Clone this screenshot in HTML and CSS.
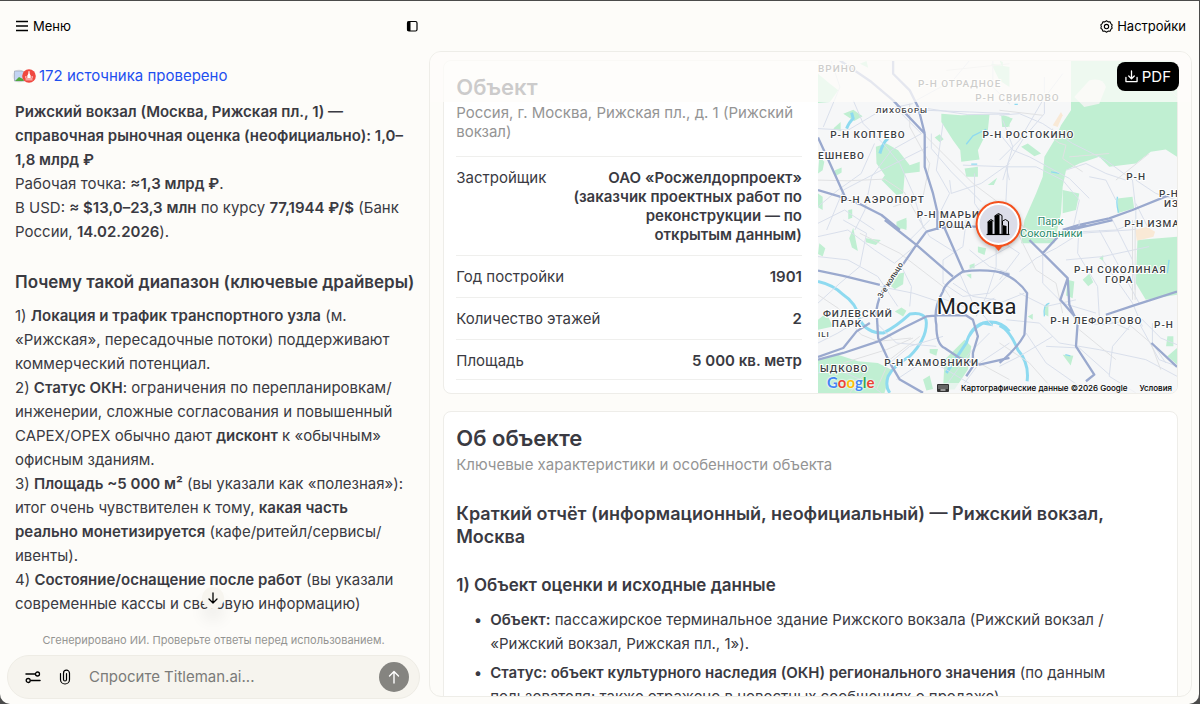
FILE: index.html
```html
<!DOCTYPE html>
<html lang="ru">
<head>
    <meta charset="UTF-8">
    <meta name="viewport" content="width=device-width, initial-scale=1.0">
    <title>Titleman.ai</title>
    <link rel="stylesheet" href="styles.css">
</head>
<body>
    <div class="app">
        <header class="topbar">
            <div class="topbar-left">
                <button class="link-btn" type="button">
                    <svg class="icon-menu" viewBox="0 0 14 14" width="14" height="14"><path d="M1 2.500h12M1 7h12M1 11.500h12"/></svg>
                    Меню
                </button>
                <button class="link-btn" type="button" aria-label="Свернуть панель">
                    <svg viewBox="0 0 12 12" width="12" height="12"><rect x="1.500" y="1.500" width="9.500" height="9.500" rx="1.500" fill="none" stroke="#000" stroke-width="1.200"/><path d="M1.500 1.500h3v9.500h-3z" fill="#000"/></svg>
                </button>
            </div>
            <button class="link-btn" type="button">
                <svg class="icon-line" viewBox="0 0 24 24" width="13" height="13"><path d="M12 1.500l3 2 3.500-.2 1.500 3.300 2.500 2.400-1 3 1 3-2.500 2.400-1.500 3.300-3.500-.2-3 2-3-2-3.500.2L4 17.400 1.500 15l1-3-1-3L4 6.600l1.500-3.300 3.500.2z"/><circle cx="12" cy="12" r="4"/></svg>
                Настройки
            </button>
        </header>

        <main class="columns">
            <section class="chat">
                <div class="messages">
                    <a class="sources" href="#sources">
                        <svg width="24" height="14" viewBox="0 0 24 14">
                            <circle cx="7" cy="7" r="6.500" fill="#e9e9e9"/>
                            <path d="M2.500 2h8l2 2v8h-10z" fill="#c3d4f3" stroke="#9aa3b5" stroke-width=".7"/>
                            <path d="M3 12l4-4 4 2 1 2z" fill="#4fa83d"/>
                            <circle cx="17" cy="7" r="6.800" fill="#f0473f"/>
                            <path d="M16.600 2h.8l.4 3 .9 1.500V9h1V7h.8v2.500h-7V7h.8v2h1V6.500l.9-1.500zM13.500 10.500h7v.8h-7z" fill="#fff"/>
                        </svg>
                        172 источника проверено
                    </a>
                    <p>
                        <b>Рижский вокзал (Москва, Рижская пл., 1) — справочная рыночная оценка (неофициально): 1,0–<wbr>1,8&nbsp;млрд&nbsp;₽</b><br>
                        Рабочая точка: <b>≈1,3 млрд ₽</b>.<br>
                        В USD: <b>≈ $13,0–23,3 млн</b> по курсу <b>77,1944 ₽/$</b> (Банк России, <b>14.02.2026</b>).
                    </p>
                    <h3>Почему такой диапазон (ключевые драйверы)</h3>
                    <p>
                        1) <b>Локация и трафик транспортного узла</b> (м. «Рижская», пересадочные потоки) поддерживают коммерческий потенциал.<br>
                        2) <b>Статус ОКН</b>: ограничения по перепланировкам/<wbr>инженерии, сложные согласования и повышенный CAPEX/OPEX обычно дают <b>дисконт</b> к «обычным» офисным зданиям.<br>
                        3) <b>Площадь ~5 000 м²</b> (вы указали как «полезная»): итог очень чувствителен к тому, <b>какая часть реально монетизируется</b> (кафе/ритейл/сервисы/<wbr>ивенты).<br>
                        4) <b>Состояние/оснащение после работ</b> (вы указали современные кассы и световую информацию)
                    </p>
                </div>

                <div class="composer">
                    <button class="scroll-down" type="button" aria-label="Вниз">
                        <svg class="icon-line" viewBox="0 0 12 12" width="12" height="12"><path d="M6 1v10M2 7l4 4 4-4" stroke-width="1.300"/></svg>
                    </button>
                    <p class="disclaimer">Сгенерировано ИИ. Проверьте ответы перед использованием.</p>
                    <form class="prompt">
                        <button class="tool" type="button" aria-label="Параметры">
                            <svg class="icon-line" viewBox="0 0 16 14" width="16" height="14"><path d="M1 4h9M6 10.500h9" stroke-width="1.500"/><circle cx="12.500" cy="4" r="2" stroke-width="1.300"/><circle cx="3.200" cy="10.500" r="2" stroke-width="1.300"/></svg>
                        </button>
                        <button class="tool" type="button" aria-label="Прикрепить файл">
                            <svg class="icon-line" viewBox="0 0 12 16" width="12" height="16"><path d="M1.500 4.500v6a4.500 4.500 0 0 0 9 0V4.200a3 3 0 0 0-6 0v6.300a1.500 1.500 0 0 0 3 0V4.500" stroke-width="1.200"/></svg>
                        </button>
                        <input type="text" placeholder="Спросите Titleman.ai..." aria-label="Сообщение">
                        <button class="send" type="submit" aria-label="Отправить">
                            <svg viewBox="0 0 14 14" width="14" height="14"><path d="M7 13V1.500M2.500 6L7 1.500 11.500 6"/></svg>
                        </button>
                    </form>
                </div>
            </section>

            <section class="report">
                <div class="report-bar">
                    <button class="pdf" type="button">
                        <svg viewBox="0 0 14 14" width="13" height="13"><path d="M7 1v8M4 6.500L7 9.500l3-3M1 8v4.500h12V8"/></svg>
                        PDF
                    </button>
                </div>

                <article class="card object">
                    <div class="object-info">
                        <h1>Объект</h1>
                        <p class="subtitle">Россия, г. Москва, Рижская пл., д. 1 (Рижский вокзал)</p>
                        <table>
                            <tbody>
                                <tr><th scope="row">Застройщик</th><td>ОАО «Росжелдорпроект» (заказчик проектных работ по реконструкции — по открытым данным)</td></tr>
                                <tr><th scope="row">Год постройки</th><td>1901</td></tr>
                                <tr><th scope="row">Количество этажей</th><td>2</td></tr>
                                <tr><th scope="row">Площадь</th><td>5 000 кв. метр</td></tr>
                            </tbody>
                        </table>
                    </div>
                    <div class="map">
                        <svg class="map-canvas" viewBox="0 0 360 334" preserveAspectRatio="xMidYMid slice">
                            <!-- north-west -->
                            <g transform="translate(-8 -10) scale(.3333)">
                                <path class="park" d="M395 190l60 5 85-3-5 48-30 60 5 28-55 7-3-35-22-30-35-55zM198 290l32-10 35 20 35 45 30-10v30l-45 5-5 60-20 5-45-45 10-15-25-35zM24 70l36 30 25 20-25 35-36 3zM70 235l22-20v28zM100 190l30-12 28 20-25 14zM375 262l15-10 12 15-12 8zM75 360l20-8v15l-20 12zM28 320l15 15-5 25-14 10zM465 355l40-5v30h-35zM545 40l55 10v60l-30-20zM150 40l20-8 5 20zM580 195l20 5v30l-18-8zM115 480l12-2v25l-12 5zM260 515l30-12v30l-30 5zM535 405l28-22-10 22zM24 430l14 10v40l-14-8z"/>
                                <path class="river" d="M110 235q8-20 20-30l-5-18M235 265q-15 10-25 45"/>
                                <path class="stream" d="M470 282l20-25 40-20M485 342h18"/>
                                <path class="road" d="M24 235l90 5 100-60 95-20M130 150l30 70 60 60 50 60 40 90 30 100M350 180l130 5 120 5M355 175l120 18 125-2M365 250v45l60 70 90 90M355 290l-140 70-115 60-50 120M24 470l60-50 70-50 40-90M265 180l70 70-90 50-60 80-20 100-30 60M460 345l130 5 10 40M495 370v90l40 60M420 390l5 40 90-30 85-60M60 20l30 90-50 120M24 520l80-40 90 60M400 220l-20 140 40 70-30 60M480 30l-50 60-110 60M550 30v80l50 50"/>
                                <path class="rail" d="M24 390l90 2 110-5 60 40 60 110M340 250l60 60 90 90 80 60M410 60L600 40M300 160v70l60 110-20 100-90 30"/>
                                <path class="major" d="M24 262l36 78 45 100M24 420l66 20 60 22 65 33 55 45M90 30l95 65 65 55 95 100v100l25 80 13 55v55M250 30v40l50 50 25 50 20 80"/>
                            </g>
                            <!-- north-east -->
                            <g transform="translate(182 -60) scale(.3333)">
                                <path class="park" d="M215 180h319v290l-34-22-45 7-45 35-80 10-30-30-60 20-40 20-10 50-5 80-20 90H65l10-70 35-80 20-50 5-60 30-50 20-45 30-45zM190 570l50 10-10 50-40 10zM355 595l45-5 5 35-50 15zM5 345l35 10-15 25H8zM65 440l20-10 40 30-20 8zM0 180l10 5v20z"/>
                                <path class="land" d="M270 240q40-10 50 20l-20 50-45 10-30-30z"/>
                                <path class="sand" d="M160 375l25-40 5 10-15 35z"/>
                                <path class="stream" d="M45 312h10M155 515l25 5M355 590q-5 20 3 48"/>
                                <path class="road" d="M0 345l60-5 70 30 90 60 100 50 80 60 10 90v60M0 400l40 50 50 20 120 65 60 60M20 500h90l80 40M0 480l60-60 70-120 60-80M15 690l10-200 50-80 60-70V230M200 510l60-20 60 30 60 20M190 540l50 60-20 90M350 600l-30-60-50-10M410 540l60 40 64 20M450 690l-40-80M10 360l30 80-30 100"/>
                                <path class="rail" d="M160 385q-10 40 40 50l-10 40 60 40M0 330l130 15M534 290l-20-20M210 470l120-10M350 540l100-80"/>
                                <path class="major" d="M190 690l50-15 90-20 70-25 110-45"/>
                            </g>
                            <!-- south-west -->
                            <g transform="translate(-8 160) scale(.3333)">
                                <path class="park" d="M238 195l20-32 25-5-3 35-25 15zM118 55l12-32 14 70-18-10zM168 55l45 5-15 15-30-8zM28 70l18 15-8 25-14-8zM265 5l25-5v30l-15-5zM255 275l20-12 15 10-10 17zM24 300l25-20 20 40-45 10zM24 420l60-15 60 20 60 5 40 20-20 70H24zM480 135l15-5v15h-15zM505 80l25 5-5 20-20-8zM360 388h25l-5 20-20-8zM405 420l60-60 20 20-10 70-40 60h-35zM340 480l20-12 10 40-20 5zM470 165l15-3v15z"/>
                                <path class="river" d="M24 185q46 10 76 40 40 25 50 75 20 40 70 40 40-20 80-57 50-8 50 27 0 50-50 100-50 30-65 60-10 30 5 50M410 460l60-90q10-40 50-60 50-12 80 25M470 370q15-50 50-60l30 5"/>
                                <path class="road" d="M24 50l90-20 80 60 60 40 60-50M24 110l90 10 90 50 60 90M100 0l70 40-20 100-60 50-66 60M275 140l30 60-5 60M400 120v70l60 40 80-10 60-60M430 190l60 40 70 10M210 200l100 20 90 30M360 0l-60 60M240 430l60-50 100-30M260 480l90-60 60 30 100 60M24 460l60-10 90 40 40 30M450 160l40 90 60 70M560 60v80l-30 90-30 60M480 90l60 50 60 20M470 0l-10 80-60 40M330 0l30 50 80 50M395 235l80 30 80-30M540 340l-60 60-80 110M600 370l-90 60-60 80M200 310l60 60 120 10M600 80l-90 50-50 30M24 370l60-30 80-50"/>
                                <path class="rail" d="M24 225l60 40 70 80 50 20 100-10M100 430l130-40 80-35M200 510l40-90 90-70M150 40l120 60 130 100 40 60M600 480l-110-60-90 10M120 520l60-80"/>
                                <path class="major" d="M225 0l95 75 110 95M600 165q-60-20-140-10-55 35-60 60-30 50-20 100 0 60 25 70l45 30 60 20 90-20M350 35l-30 40-45 65q-65 60-75 130l5 85 35 75 30 50 70 40M24 420l76-20 105-35 75-40 70-35 35-3h85l20 13 15 50-15 50v40l-20 30M24 412l76-27 40-50 40-25M24 152l76 16 110 27M350 35l53-15 59 135M403 20h197"/>
                            </g>
                            <!-- south-east -->
                            <g transform="translate(182 160) scale(.3333)">
                                <path class="park" d="M415 60l119-10v175l-94 15-30-50zM250 180l20-18 12 25-15 12zM190 405l32 3-8 30zM300 115l12-10v18zM505 350h18v30h-22zM205 180l20 5-5 50-20-8zM505 410l29-25v50zM85 290l15-8v18zM0 0h55l-15 25H0zM135 260l12-10v40l-10-5z"/>
                                <path class="sand" d="M408 30l35-10 25 15-5 15-50 12z"/>
                                <path class="river" d="M0 318q30 12 55 72 35 40 28 95"/>
                                <path class="stream" d="M150 250q-20 5-15 40M198 405l15 4M510 120l-5 40"/>
                                <path class="road" d="M60 155l50-40 60-30 80-50 100-5 80-30M130 100v90l60 60 100 30M240 0l-5 100 60 100 5 90 90 40M200 120l110-10 140-30M20 300l100 10 60 60 120 20 140 30 94 50M235 310l80 5 110-20 60 60 49 20M140 380l100 5 90 80M400 310l-60 70-10 90 80 50M310 120l90 130 30 70M60 220l80 40 90-20M80 340l60 90 100 70M300 30l120 220M420 310l60 110 54 20M0 60l60 40-60 80M340 0l60 120 8 90M240 40l150-10 18-2M0 440l60-30 100-60M460 310v60l40 60M0 250l75-30"/>
                                <path class="rail" d="M0 60l50-30 60 120 60 40 20 90M400 0v240M408 0v240M0 370l90 60 80 90M385 310l70 60 30 80M240 330l110 90M40 0l100 60 100-20"/>
                                <path class="major" d="M0 157q55 20 83 63l-8 125Q50 390 0 430M90 60l40 40 75 75 5 80 25 55-5 70 55 85-25 20M205 175l-22 65 52 60M130 100l60-65 70-20M190 35L340 0M320 285l80-27 134-43M457 370l77 72"/>
                            </g>
                            <g class="labels">
                                <text x="0" y="12">ВРИНО</text>
                                <text class="mid" x="142" y="27">Р-Н ОТРАДНОЕ</text>
                                <text class="mid" x="200" y="41">Р-Н СВИБЛОВО</text>
                                <text class="mid small" x="84" y="53">ЛИХОБОРЫ</text>
                                <text class="mid" x="50" y="78">Р-Н КОПТЕВО</text>
                                <text class="mid" x="211" y="78">Р-Н РОСТОКИНО</text>
                                <text x="0" y="99">ЕШНЕВО</text>
                                <text class="mid" x="65" y="143">Р-Н АЭРОПОРТ</text>
                                <text x="99" y="158">Р-Н МАРЬИ</text>
                                <text class="mid" x="138" y="168">РОЩА</text>
                                <text x="309" y="120">Р-Н</text>
                                <text x="342" y="137">Р-Н</text>
                                <text x="347" y="147">ИЗ</text>
                                <text x="307" y="167">Р-Н ИЗМА</text>
                                <text class="mid" x="303" y="213">Р-Н СОКОЛИНАЯ</text>
                                <text class="mid" x="302" y="223">ГОРА</text>
                                <text class="mid" x="279" y="264">Р-Н ЛЕФОРТОВО</text>
                                <text x="337" y="268">Р-Н</text>
                                <text class="mid" x="40" y="257">ФИЛЕВСКИЙ</text>
                                <text class="mid" x="29" y="267">ПАРК</text>
                                <text class="small" x="0" y="277">ILI</text>
                                <text class="mid" x="114" y="306">Р-Н ХАМОВНИКИ</text>
                                <text x="2" y="312">ЫДКОВО</text>
                                <text class="ring" transform="translate(64 239) rotate(-58)">3-е кольцо</text>
                                <text class="green" x="233" y="165">Парк</text>
                                <text class="green" x="234" y="177">Сокольники</text>
                                <text class="city" x="159" y="254">Москва</text>
                            </g>
                            <g class="marker">
                                <path d="M175 184l6 7 6-7z" fill="#f4511e"/>
                                <circle cx="181" cy="164" r="22" fill="#fff" stroke="#f4511e" stroke-width="2"/>
                                <circle cx="181" cy="164" r="19" fill="#dcdde9"/>
                                <path d="M170 162l5-2v14h-5zM177 156l5-2v20h-5zM185 165l4 1v8h-4z" fill="#000"/>
                                <path d="M177 156l4-2.500 3.500 2V174M185 165v-4l3-1.500 3 2V174M170 162l3.500-2.500 2.500 1.500" fill="none" stroke="#000"/>
                                <path d="M169 174.500h23" stroke="#000" stroke-width="1.200"/>
                            </g>
                        </svg>
                        <div class="map-footer">
                            <span class="google"><i class="b">G</i><i class="r">o</i><i class="y">o</i><i class="b">g</i><i class="g">l</i><i class="r">e</i></span>
                            <span class="map-legal">
                                <svg viewBox="0 0 12 8" width="12" height="8"><rect width="12" height="8" rx="1" fill="#333"/><path d="M1.500 2h9M1.500 4h9" stroke="#fff" stroke-dasharray="1 1"/><path d="M3.500 6h5" stroke="#fff"/></svg>
                                <span>Картографические данные ©2026 Google</span>
                                <a href="#terms">Условия</a>
                            </span>
                        </div>
                    </div>
                </article>

                <article class="card about">
                    <h1>Об объекте</h1>
                    <p class="subtitle">Ключевые характеристики и особенности объекта</p>
                    <h2>Краткий отчёт (информационный, неофициальный) — Рижский вокзал, Москва</h2>
                    <h3>1) Объект оценки и исходные данные</h3>
                    <ul>
                        <li><b>Объект:</b> пассажирское терминальное здание Рижского вокзала (Рижский вокзал / «Рижский вокзал, Рижская пл., 1»).</li>
                        <li><b>Статус: объект культурного наследия (ОКН) регионального значения</b> (по данным пользователя; также отражено в новостных сообщениях о продаже).</li>
                    </ul>
                </article>
            </section>
        </main>
    </div>
</body>
</html>
```
FILE: styles.css
```css
* {
    box-sizing: border-box;
}
html {
    height: 100%;
    background: #4b4b4b;
}
body {
    margin: 0;
    height: 100%;
    padding: 1px 1px 0 0;
    font-family: Inter, "Liberation Sans", sans-serif;
    font-size: 15px;
    line-height: 24px;
    color: #3a3a42;
}
h1, h2, h3, p, ul {
    margin: 0;
}
b {
    font-weight: 600;
}
button {
    font: inherit;
    border: 0;
    padding: 0;
    background: none;
    cursor: pointer;
}
svg {
    flex: none;
}

.app {
    height: 100%;
    display: flex;
    flex-direction: column;
    background: #fdfcf9;
    border-radius: 0 0 10px 10px;
    overflow: hidden;
}

/* top bar */
.topbar {
    display: flex;
    justify-content: space-between;
    align-items: center;
    height: 50px;
    padding-right: 13px;
}
.topbar-left {
    display: flex;
    justify-content: space-between;
    width: 35.8%;
    padding: 0 7px 0 15px;
}
.link-btn {
    display: flex;
    align-items: center;
    gap: 4px;
    font-size: 13px;
    color: #000;
}
.icon-menu {
    stroke: #000;
    stroke-width: 1.4;
}
.icon-line {
    fill: none;
    stroke: #000;
    stroke-width: 2;
    stroke-linecap: round;
    stroke-linejoin: round;
}

.columns {
    flex: 1;
    min-height: 0;
    display: flex;
}

/* chat */
.chat {
    width: 35.8%;
    display: flex;
    flex-direction: column;
}
.messages {
    flex: 1;
    min-height: 0;
    overflow: hidden;
    padding: 13px 15px 0;
}
.messages p {
    margin-top: 12px;
}
.messages h3 {
    margin: 24px -8px 0 0;
    font-size: 17px;
    line-height: 28px;
    font-weight: 600;
}
.messages h3 + p {
    margin-top: 8px;
}
.sources {
    display: flex;
    align-items: center;
    gap: 3px;
    margin-left: -3px;
    color: #1d4ff0;
    text-decoration: none;
}
.composer {
    position: relative;
    padding: 0 9px 5px 7px;
}
.scroll-down {
    position: absolute;
    left: 50%;
    top: -45px;
    margin-left: -13px;
    width: 22px;
    height: 22px;
    display: flex;
    align-items: center;
    justify-content: center;
    border-radius: 50%;
    background: #f7f5ef;
    box-shadow: 0 12px 16px rgba(0, 0, 0, 0.06);
}
.disclaimer {
    font-size: 11px;
    line-height: 16px;
    margin: 0 0 7px;
    text-align: center;
    color: #949492;
}
.prompt {
    display: flex;
    align-items: center;
    height: 44px;
    padding: 0 10px 0 17px;
    border: 1px solid #eeece5;
    border-radius: 22px;
    background: #f6f4ee;
}
.tool {
    display: flex;
    justify-content: center;
    width: 16px;
    margin-right: 16px;
}
.prompt input {
    flex: 1;
    min-width: 0;
    border: 0;
    padding: 0;
    background: none;
    outline: none;
    font: inherit;
}
.prompt input::placeholder {
    color: #7b7b79;
}
.send {
    display: flex;
    align-items: center;
    justify-content: center;
    width: 30px;
    height: 30px;
    border-radius: 50%;
    background: #858480;
}
.send svg, .pdf svg {
    fill: none;
    stroke: #fff;
    stroke-width: 1.4;
    stroke-linecap: round;
    stroke-linejoin: round;
}

/* report */
.report {
    position: relative;
    flex: 1;
    min-width: 0;
    margin: 0 7px 7px 0;
    padding: 8px 13px 0;
    border: 1px solid #eeede8;
    border-radius: 12px;
    overflow: hidden;
}
.report-bar {
    position: absolute;
    z-index: 1;
    top: 0;
    left: 0;
    right: 0;
    height: 50px;
    padding: 10px 12px;
    display: flex;
    justify-content: flex-end;
    background: rgba(253, 252, 249, 0.75);
}
.pdf {
    display: flex;
    align-items: center;
    gap: 4px;
    height: 29px;
    padding: 0 8px;
    border-radius: 8px;
    background: #000;
    color: #fff;
}
.card {
    border: 1px solid #eeede9;
    border-radius: 8px;
    background: #fff;
    overflow: hidden;
}
.card h1 {
    font-size: 22px;
    line-height: 28px;
    font-weight: 600;
}
.subtitle {
    line-height: 19px;
    color: #949494;
}
.object {
    display: grid;
    grid-template-columns: 51% 49%;
    height: 334px;
    margin-bottom: 17px;
}
.object-info {
    padding: 12px 16px 0 12px;
}
.object-info .subtitle {
    margin: 2px 0 15px;
}
.object-info table {
    width: 100%;
    border-collapse: collapse;
    border-bottom: 1px solid #efefed;
}
.object-info tr {
    border-top: 1px solid #efefed;
}
.object-info th, .object-info td {
    padding: 11px 0;
    line-height: 19px;
    vertical-align: top;
    text-align: right;
    font-weight: 600;
}
.object-info tr:last-child > * {
    padding-bottom: 9px;
}
.object-info th {
    width: 32%;
    text-align: left;
    font-weight: 400;
}
.object-info table {
    table-layout: fixed;
}
.object-info th {
    white-space: nowrap;
}

/* map */
.map {
    position: relative;
    min-width: 0;
    background: #f6f7f8;
    overflow: hidden;
}
.map-canvas {
    display: block;
    width: 100%;
    height: 100%;
}
.map-canvas path {
    stroke-linejoin: round;
}
.park {
    fill: #c0efd2;
}
.land {
    fill: #eef3f0;
}
.sand {
    fill: #f9e9d6;
}
.river, .stream, .road, .rail, .major {
    fill: none;
}
.river, .stream {
    stroke: #8edaf0;
    stroke-width: 9;
}
.stream {
    stroke-width: 4;
}
.road {
    stroke: #d9dfeb;
    stroke-width: 3;
}
.rail {
    stroke: #e0e1e3;
    stroke-width: 3;
}
.major {
    stroke: #9aa9ce;
    stroke-width: 7;
}
.labels text {
    font-family: Roboto, sans-serif;
    font-size: 10px;
    font-weight: 500;
    letter-spacing: 1px;
    fill: #3c4043;
    stroke: #fff;
    stroke-width: 2px;
    paint-order: stroke;
}
.labels .mid, .labels .green, .labels .city {
    text-anchor: middle;
}
.labels .small {
    font-size: 8px;
}
.labels .ring {
    font-size: 8px;
    letter-spacing: 0;
}
.labels .green {
    fill: #2a8a6a;
    font-size: 11px;
    font-weight: 400;
    letter-spacing: 0;
}
.labels .city {
    font-size: 22px;
    font-weight: 400;
    letter-spacing: 0;
    fill: #202124;
}
.marker {
    filter: drop-shadow(0 2px 2px rgba(0, 0, 0, 0.25));
}
.map-footer {
    position: absolute;
    left: 9px;
    right: 5px;
    bottom: 0;
    display: flex;
    justify-content: space-between;
    align-items: flex-end;
}
.google {
    font-family: Lato, sans-serif;
    font-size: 15px;
    line-height: 22px;
    text-shadow: 0 0 2px #fff, 0 0 2px #fff;
}
.google i {
    font-style: normal;
    font-weight: 700;
}
.google .b { color: #4285f4; }
.google .r { color: #ea4335; }
.google .y { color: #fbbc05; }
.google .g { color: #34a853; }
.map-legal {
    display: flex;
    align-items: center;
    gap: 12px;
    font-size: 8px;
    line-height: 10px;
    font-weight: 500;
    color: #000;
    white-space: nowrap;
    background: rgba(246, 247, 248, 0.7);
}
.map-legal a {
    color: #000;
    text-decoration: none;
}

/* about */
.about {
    padding: 12px 13px 0 12px;
}
.about .subtitle {
    margin-top: 3px;
}
.about h2 {
    margin-top: 28px;
    font-size: 18px;
    line-height: 23px;
    font-weight: 600;
}
.about h3 {
    margin-top: 24px;
    font-size: 17px;
    line-height: 26px;
    font-weight: 600;
}
.about ul {
    margin-top: 10px;
    padding-left: 34px;
}
.about li {
    margin-bottom: 5px;
}
.about li::marker {
    content: "•  ";
}
```
